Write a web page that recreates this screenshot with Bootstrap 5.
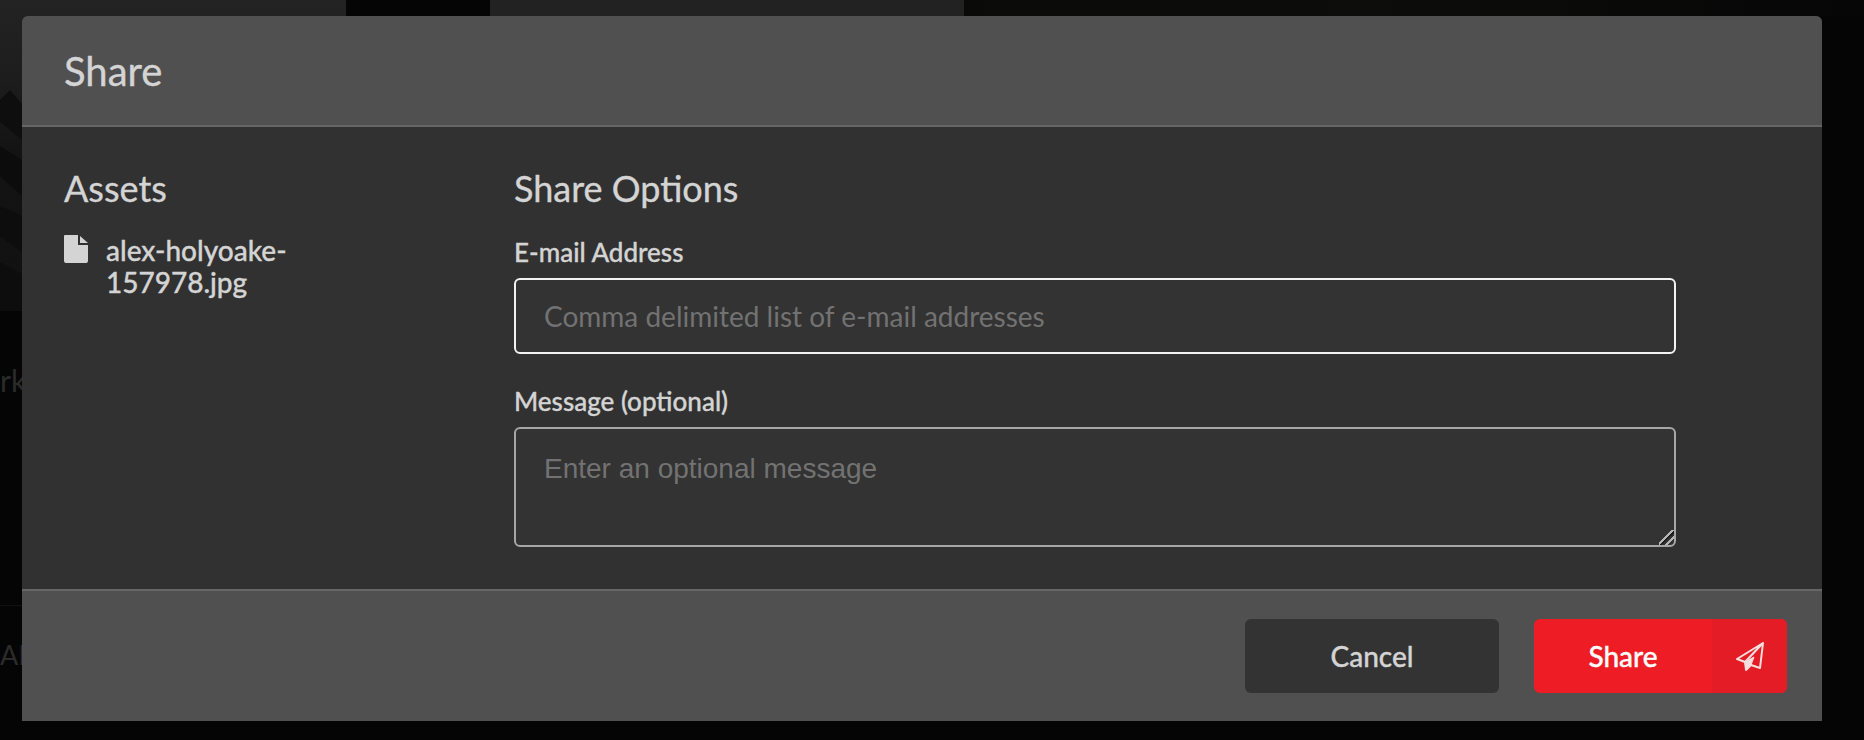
<!DOCTYPE html>
<html>
<head>
    <title>Share</title>
    <link rel="stylesheet" href="https://cdn.jsdelivr.net/npm/bootstrap@5.3.3/dist/css/bootstrap.min.css">
    <style>
        body {
            background-color: #050505;
            height: 740px;
            overflow: hidden;
            font-family: Lato, "Liberation Sans", sans-serif;
        }
        .page-behind { height: 311px; }
        .tile-a { width: 346px; background: linear-gradient(#232323, #1d1d1d 25%, #131313 50%, #111 100%); }
        .tile-a svg { display: block; }
        .tile-gap { width: 144px; }
        .tile-b { width: 474px; height: 16px; background: #222; }
        .tile-c { flex: 1; height: 16px; background: linear-gradient(90deg, #0a0a08, #0d0d0c 45%, #060606); }
        .behind-text { position: absolute; left: 0; color: #2b2b2b; line-height: 32px; }
        .behind-rule { position: absolute; left: 0; top: 605px; width: 22px; border-top: 1px solid #111; }
        .share-dialog {
            position: absolute;
            left: 22px;
            top: 16px;
            width: 1800px;
            height: 705px;
            background: #313131;
            border: 0;
            border-radius: 6px 6px 0 0;
            color: #d4d4d4;
            -webkit-text-stroke: .35px;
        }
        .share-dialog .modal-header {
            height: 111px;
            padding: 0 42px;
            background: #505050;
            border-bottom: 2px solid #666;
            border-radius: 6px 6px 0 0;
        }
        .share-dialog .modal-title { font-size: 40px; font-weight: 400; line-height: 1; }
        .share-dialog .modal-body { padding: 41px 42px 0; }
        .assets-col { width: 450px; flex: none; }
        .options-col { width: 1162px; flex: none; }
        .col-title { font-size: 36px; font-weight: 400; line-height: 40px; }
        .assets-col .col-title { margin-bottom: 26px; }
        .options-col .col-title { margin-bottom: 29px; }
        .asset-row { gap: 18px; font-size: 28px; font-weight: 500; line-height: 32px; }
        .asset-name { width: 240px; }
        .file-icon { width: 24px; height: 28px; flex: none; margin-top: 1px; }
        .field-label { font-size: 26px; font-weight: 500; line-height: 30px; margin-bottom: 11px; }
        .share-dialog .form-control {
            background: #333;
            color: #d4d4d4;
            border: 2px solid #a6a6a6;
            border-radius: 6px;
            box-shadow: none;
            padding: 0 28px;
            -webkit-text-stroke: 0;
        }
        .share-dialog .form-control::placeholder { color: #727272; opacity: 1; }
        .email-input { height: 76px; font-size: 28px; margin-bottom: 32px; }
        .share-dialog .email-input { border-color: #f2f2f2; }
        .message-input { height: 120px; font-family: "Liberation Sans", sans-serif; font-size: 28px; }
        .share-dialog .message-input { padding-top: 19px; }
        .message-input::-webkit-resizer {
            background: linear-gradient(135deg, transparent 42%, #b5b5b5 42% 52%, #1c1c1c 52% 60%, transparent 60% 68%, #b5b5b5 68% 78%, transparent 78%);
        }
        .share-dialog .modal-footer {
            height: 132px;
            padding: 28px 35px 0 0;
            background: #505050;
            border-top: 2px solid #666;
            border-radius: 0;
            gap: 35px;
            align-items: flex-start;
            flex-wrap: nowrap;
            position: absolute;
            left: 0;
            right: 0;
            bottom: 0;
        }
        .share-dialog .modal-footer > * { margin: 0; }
        .btn-cancel, .btn-send {
            height: 74px;
            border: 0;
            border-radius: 6px;
            font-size: 28px;
            font-weight: 500;
            padding: 0;
        }
        .btn-cancel { width: 254px; background: #333; color: #d4d4d4; }
        .btn-send { width: 253px; background: #ee1c25; color: #fff; overflow: hidden; }
        .send-label { flex: 1; }
        .send-icon { width: 75px; height: 100%; background: #e31c25; }
    </style>
</head>
<body class="position-relative">

    <div class="page-behind d-flex">
        <div class="tile-a">
            <svg width="22" height="311" viewBox="0 0 22 311">
                <path fill="#0e0e0e" d="M0 100L10 90 22 104V140L0 122z"/>
                <path fill="#0c0c0c" d="M0 146L22 160V196L0 176z"/>
                <path fill="#0d0d0d" d="M0 206L22 216V252L0 236zM0 262L22 274V311H0z"/>
            </svg>
        </div>
        <div class="tile-gap"></div>
        <div class="tile-b"></div>
        <div class="tile-c"></div>
    </div>
    <div class="behind-text" style="top: 364px; font-size: 30px">rk</div>
    <div class="behind-rule"></div>
    <div class="behind-text" style="top: 639px; font-size: 27px">AD</div>

    <div class="modal-content share-dialog">
        <div class="modal-header">
            <h5 class="modal-title">Share</h5>
        </div>
        <div class="modal-body d-flex">
            <div class="assets-col">
                <h5 class="col-title">Assets</h5>
                <div class="asset-row d-flex">
                    <svg class="file-icon" viewBox="0 0 24 28"><path fill="#d4d4d4" d="M1 0H14V10H24V26a2 2 0 0 1-2 2H2a2 2 0 0 1-2-2V1a1 1 0 0 1 1-1zM16 1l8 7h-8z"/></svg>
                    <div class="asset-name">alex-holyoake-157978.jpg</div>
                </div>
            </div>
            <div class="options-col">
                <h5 class="col-title">Share Options</h5>
                <label class="field-label d-block">E-mail Address</label>
                <input class="form-control email-input" placeholder="Comma delimited list of e-mail addresses">
                <label class="field-label d-block">Message (optional)</label>
                <textarea class="form-control message-input" placeholder="Enter an optional message"></textarea>
            </div>
        </div>
        <div class="modal-footer">
            <button class="btn btn-cancel">Cancel</button>
            <button class="btn btn-send d-flex align-items-center">
                <span class="send-label">Share</span>
                <span class="send-icon d-flex align-items-center justify-content-center">
                    <svg width="30" height="30" viewBox="0 0 30 30" fill="none" stroke="#f8dede" stroke-width="2" stroke-linejoin="round"><path d="M28 2L2 18l8 3 1 8 5-5 9 3zM28 2L10 21"/><path fill="#f8dede" stroke-width="1" d="M10 21l1 8 5-5 3-8z"/></svg>
                </span>
            </button>
        </div>
    </div>

</body>
</html>
